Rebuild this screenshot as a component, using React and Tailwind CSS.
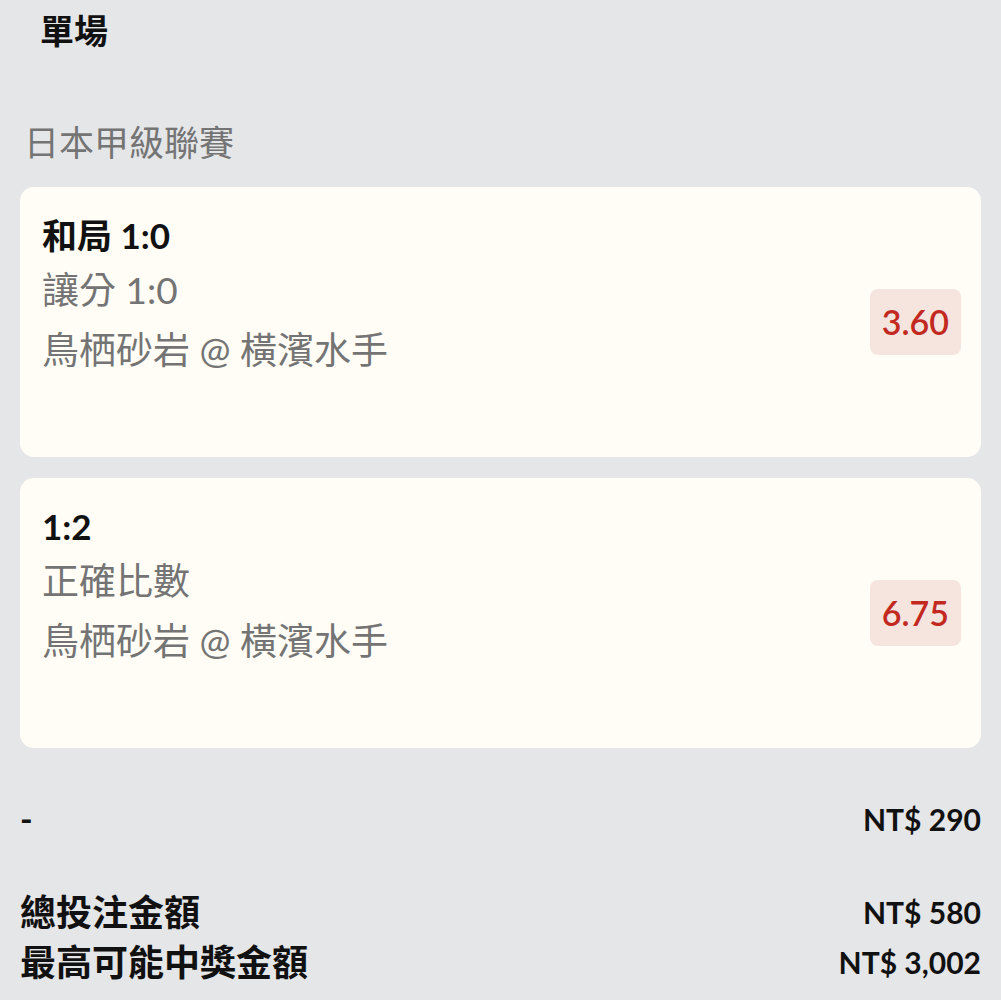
const bets = [
  {
    pick: "和局 1:0",
    market: "讓分 1:0",
    match: "鳥栖砂岩 @ 橫濱水手",
    odds: "3.60",
  },
  {
    pick: "1:2",
    market: "正確比數",
    match: "鳥栖砂岩 @ 橫濱水手",
    odds: "6.75",
  },
];

function BetCard({ bet }) {
  return (
    <div className="flex h-[270px] items-center justify-between rounded-[14px] bg-[#fffdf5] pl-[22px] pr-[20px]">
      <div className="self-start pt-[23px]">
        <p className="text-[35px] font-bold leading-[50px] text-[#111]">
          {bet.pick}
        </p>
        <p className="text-[37px] leading-[60px] text-[#747474]">
          {bet.market}
        </p>
        <p className="text-[37px] leading-[60px] text-[#747474]">
          {bet.match}
        </p>
      </div>
      <div className="rounded-[8px] bg-[#f6e5df] px-[12px] py-[9px] text-[34px] font-semibold leading-[48px] text-[#c2291f]">
        {bet.odds}
      </div>
    </div>
  );
}

export default function App() {
  return (
    <div className="min-h-screen bg-[#e5e6e8] px-[20px] font-['Lato','Noto_Sans_CJK_TC',sans-serif]">
      <h1 className="pl-[20px] pt-[8px] text-[34px] font-bold leading-[46px] text-[#111]">
        單場
      </h1>

      <h2 className="mt-[65px] pl-[4px] text-[35px] leading-[46px] text-[#747474]">
        日本甲級聯賽
      </h2>

      <div className="mt-[22px] flex flex-col gap-[21px]">
        {bets.map((bet, i) => (
          <BetCard key={i} bet={bet} />
        ))}
      </div>

      <div className="mt-[49px] flex items-center justify-between text-[#111]">
        <span className="text-[34px] font-bold leading-[44px]">-</span>
        <span className="text-[30px] font-bold leading-[44px]">NT$ 290</span>
      </div>

      <div className="mt-[46px] flex flex-col text-[#111]">
        <div className="flex items-center justify-between leading-[50px]">
          <span className="text-[36px] font-bold">總投注金額</span>
          <span className="text-[30px] font-bold">NT$ 580</span>
        </div>
        <div className="flex items-center justify-between leading-[50px]">
          <span className="text-[36px] font-bold">最高可能中獎金額</span>
          <span className="text-[30px] font-bold">NT$ 3,002</span>
        </div>
      </div>
    </div>
  );
}
